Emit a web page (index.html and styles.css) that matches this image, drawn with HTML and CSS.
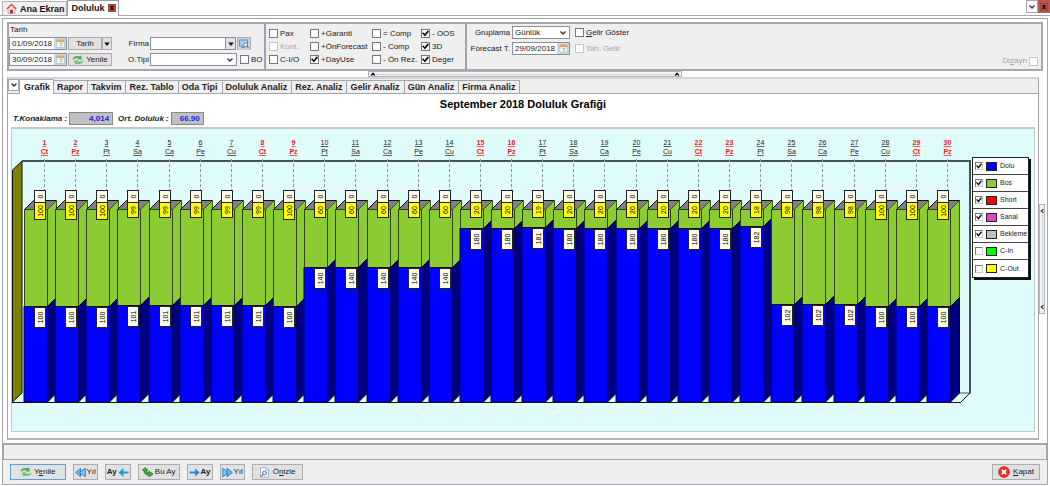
FILE: index.html
```html
<!DOCTYPE html>
<html lang="tr">
<head>
<meta charset="utf-8">
<title>Doluluk</title>
<link rel="stylesheet" href="styles.css">
</head>
<body>
<svg class="defs" aria-hidden="true">
  <symbol id="i-down" viewBox="0 0 8 8"><path d="M1.5 2.5 4 5 6.5 2.5" fill="none" stroke="#333" stroke-width="1.4"/></symbol>
  <symbol id="i-up" viewBox="0 0 8 8"><path d="M1.5 6 4 3 6.5 6" fill="none" stroke="#111" stroke-width="1.6"/></symbol>
  <symbol id="i-left" viewBox="0 0 8 8"><path d="M6 1.5 3 4 6 6.500" fill="none" stroke="#222" stroke-width="1.4"/></symbol>
  <symbol id="i-tri" viewBox="0 0 8 8"><path d="M1.200 2.500h5.600L4 6z" fill="#111"/></symbol>
  <symbol id="i-close" viewBox="0 0 8 8"><rect width="8" height="8" fill="#c0504a" stroke="#803a36"/><path d="M2.500 2 5.500 6M5.500 2 2.500 6" stroke="#301010" stroke-width="1.500"/></symbol>
  <symbol id="i-home" viewBox="0 0 10 10"><path d="M2 5v4.500h6V5L5 2z" fill="#f4e6e2" stroke="#b08078" stroke-width=".5"/><path d="M.8 5.500 5 1.200l4.200 4.300" fill="none" stroke="#cf4a40" stroke-width="1.200"/><path d="M3.800 9.500V6h2.400v3.500z" fill="#b5262a"/></symbol>
  <symbol id="i-cal" viewBox="0 0 12 12"><rect width="12" height="12" fill="#c3d9ec"/><rect x="2" y="2" width="8" height="8" fill="#f3f7ee" stroke="#9aaebb" stroke-width=".5"/><rect x="2" y="2" width="8" height="2.500" fill="#f0a050"/><path d="M5 6h3M5.500 8h2" stroke="#8fc49a" stroke-width="1.200"/></symbol>
  <symbol id="i-look" viewBox="0 0 12 12"><rect width="12" height="12" fill="#c3d3e4"/><rect x="1.500" y="2" width="8" height="6" fill="#a9cdf0" stroke="#6c94bf"/><path d="M3 9.500h4" stroke="#6c94bf"/><circle cx="7.500" cy="6.800" r="1.900" fill="#e5f3ff" stroke="#55799c" stroke-width=".8"/><path d="m9 8.300 1.800 1.900" stroke="#55799c" stroke-width="1.200"/></symbol>
  <symbol id="i-refresh" viewBox="0 0 12 10"><path d="M.6 4.800C.6 1.600 4 .2 7.200 1.300L8.600.2l1.600 4.200-5 .2 1.300-1.200C4.800 2.900 2.800 3.200.6 4.800z" fill="#58b158"/><path d="M11.400 5.200c0 3.200-3.400 4.600-6.600 3.500L3.400 9.800 1.800 5.600l5-.2-1.300 1.200c1.700.5 3.700.2 5.900-1.400z" fill="#74c074"/></symbol>
  <symbol id="i-prev2" viewBox="0 0 11 10"><path d="M5.500.8v8.400L.7 5z" fill="#5cc0f5" stroke="#1a6cae" stroke-width=".8"/><path d="M10.300.8v8.400L4.300 5z" fill="#7fccf8" stroke="#1a6cae" stroke-width=".8"/></symbol>
  <symbol id="i-next2" viewBox="0 0 11 10"><path d="M.8.8v8.400L6.500 5z" fill="#7fccf8" stroke="#1a6cae" stroke-width=".8"/><path d="M5 .8v8.400L10.300 5z" fill="#5cc0f5" stroke="#1a6cae" stroke-width=".8"/></symbol>
  <symbol id="i-prev" viewBox="0 0 10 10"><path d="M.4 5 5 .8V4h4.600v2H5v3.200z" fill="#1f9cf0"/></symbol>
  <symbol id="i-next" viewBox="0 0 10 10"><path d="M9.600 5 5.500 1.200v2.900H.5v1.800h5v2.900z" fill="#1f8fe8"/></symbol>
  <symbol id="i-now" viewBox="0 0 12 10"><path d="M.6 3.300 3.200.5l2.600 2.800H4.400c0 1.700.8 2.500 2.600 2.500V4.200l4 2.900-4 2.500V8.200C3.800 8.200 2 6.500 2 3.300z" fill="#35c430" stroke="#14601a" stroke-width=".8"/></symbol>
  <symbol id="i-preview" viewBox="0 0 10 11"><path d="M1 .7h5.600L9 3v7.200H1z" fill="#fff" stroke="#7f9cc4" stroke-width=".7"/><path d="M6.500.7V3H9" fill="#cfe0f5" stroke="#7f9cc4" stroke-width=".6"/><circle cx="5" cy="6" r="2" fill="#d4e8fb" stroke="#456ba8" stroke-width=".9"/><path d="m3.500 7.500-2.300 2.300" stroke="#c0703a" stroke-width="1.200"/></symbol>
  <symbol id="i-stop" viewBox="0 0 12 12"><circle cx="6" cy="6" r="5.500" fill="#ea3030" stroke="#c01c1c" stroke-width=".6"/><path d="m3.800 3.800 4.400 4.400M8.200 3.800 3.800 8.200" stroke="#fff" stroke-width="1.800"/></symbol>
</svg>

<header class="docs">
  <nav class="doc-tabs">
    <button class="doc-tab"><svg class="ico10"><use href="#i-home"/></svg>Ana Ekran</button>
    <button class="doc-tab active">Doluluk<svg class="ico8"><use href="#i-close"/></svg></button>
  </nav>
  <div class="doc-ctl">
    <button class="mini" aria-label="Liste"><svg class="ico8"><use href="#i-down"/></svg></button>
    <button class="mini red" aria-label="Sekmeyi kapat"><svg class="ico8"><use href="#i-close"/></svg></button>
  </div>
</header>

<main class="window">
  <section class="filters">
    <div class="group dates">
      <label class="cap" for="d1">Tarih</label>
      <span class="field date"><input id="d1" type="text" value="01/09/2018"><button aria-label="Takvim"><svg class="ico12"><use href="#i-cal"/></svg></button></span>
      <span class="split"><button class="btn">Tarih</button><button class="btn arrow" aria-label="Seç"><svg class="ico8"><use href="#i-tri"/></svg></button></span>
      <label class="lab" for="firma">Firma</label>
      <span class="pair"><span class="field firma"><input id="firma" type="text"><button class="drop" aria-label="Aç"><svg class="ico8"><use href="#i-tri"/></svg></button></span><button class="btn look" aria-label="Ara"><svg class="ico12"><use href="#i-look"/></svg></button></span>
      <span class="field date"><input type="text" value="30/09/2018" aria-label="Bitiş"><button aria-label="Takvim"><svg class="ico12"><use href="#i-cal"/></svg></button></span>
      <button class="btn"><svg class="ico-r"><use href="#i-refresh"/></svg>Yenile</button>
      <label class="lab" for="otipi">O.Tipi</label>
      <span class="pair"><span class="field sel otipi"><select id="otipi"><option></option></select><svg class="ico8 chev"><use href="#i-down"/></svg></span><label class="chk"><input type="checkbox">BO</label></span>
    </div>
    <div class="group checks">
      <label class="chk"><input type="checkbox">Pax</label>
      <label class="chk"><input type="checkbox">+Garanti</label>
      <label class="chk"><input type="checkbox">= Comp</label>
      <label class="chk"><input type="checkbox" checked>- OOS</label>
      <label class="chk off"><input type="checkbox" disabled>Kont.</label>
      <label class="chk"><input type="checkbox">+ÖnForecast</label>
      <label class="chk"><input type="checkbox">- Comp</label>
      <label class="chk"><input type="checkbox" checked>3D</label>
      <label class="chk"><input type="checkbox">C-I/O</label>
      <label class="chk"><input type="checkbox" checked>+DayUse</label>
      <label class="chk"><input type="checkbox">- Ön Rez.</label>
      <label class="chk"><input type="checkbox" checked>Deger</label>
    </div>
    <div class="group grouping">
      <label class="lab" for="grup">Gruplama</label>
      <span class="field sel"><select id="grup"><option>Günlük</option></select><svg class="ico8 chev"><use href="#i-down"/></svg></span>
      <label class="chk"><input type="checkbox"><span><u>G</u>elir Göster</span></label>
      <label class="lab" for="fc">Forecast T.</label>
      <span class="field date"><input id="fc" type="text" value="29/09/2018"><button aria-label="Takvim"><svg class="ico12"><use href="#i-cal"/></svg></button></span>
      <label class="chk off"><input type="checkbox" disabled>Tah. Gelir</label>
    </div>
    <label class="chk off design"><span>Di<u>z</u>ayn</span><input type="checkbox" disabled></label>
  </section>

  <div class="hsplit"><div class="hgrip"><svg class="ico8"><use href="#i-up"/></svg><i></i><svg class="ico8"><use href="#i-up"/></svg></div></div>

  <div class="work">
    <section class="pages">
      <nav class="tabs">
        <button class="mini" aria-label="Sekmeler"><svg class="ico8"><use href="#i-down"/></svg></button>
        <button class="tab active">Grafik</button>
        <button class="tab">Rapor</button>
        <button class="tab">Takvim</button>
        <button class="tab">Rez. Tablo</button>
        <button class="tab">Oda Tipi</button>
        <button class="tab">Doluluk Analiz</button>
        <button class="tab">Rez. Analiz</button>
        <button class="tab">Gelir Analiz</button>
        <button class="tab">Gün Analiz</button>
        <button class="tab">Firma Analiz</button>
      </nav>
      <div class="page">
        <h1>September 2018 Doluluk Grafiği</h1>
        <div class="totals">
          <label for="kon">T.Konaklama :</label><input id="kon" type="text" value="4,014" readonly>
          <label for="ort">Ort. Doluluk :</label><input id="ort" type="text" value="66.90" readonly>
        </div>
        <div class="chart">
          <svg id="chart" viewBox="0 0 1022 302" role="img" aria-label="Doluluk grafiği"></svg>
          <div class="legend">
            <label><input type="checkbox" checked><i class="dolu"></i>Dolu</label>
            <label><input type="checkbox" checked><i class="bos"></i>Bos</label>
            <label><input type="checkbox" checked><i class="short"></i>Short</label>
            <label><input type="checkbox" checked><i class="sanal"></i>Sanal</label>
            <label><input type="checkbox" checked><i class="bekleme"></i>Bekleme</label>
            <label><input type="checkbox"><i class="cin"></i>C-In</label>
            <label><input type="checkbox"><i class="cout"></i>C-Out</label>
          </div>
        </div>
      </div>
    </section>
    <div class="vsplit"><div class="vgrip"><svg class="ico8"><use href="#i-left"/></svg><i></i><svg class="ico8"><use href="#i-left"/></svg></div></div>
  </div>

  <div class="status"></div>
  <footer class="actions">
    <button class="btn wide focus"><svg class="ico-r"><use href="#i-refresh"/></svg><span>Y<u>e</u>nile</span></button>
    <button class="btn"><svg class="ico10"><use href="#i-prev2"/></svg>Yıl</button>
    <button class="btn"><b>Ay</b><svg class="ico10"><use href="#i-prev"/></svg></button>
    <button class="btn now"><svg class="ico12"><use href="#i-now"/></svg>Bu Ay</button>
    <button class="btn"><svg class="ico10"><use href="#i-next"/></svg><b>Ay</b></button>
    <button class="btn"><svg class="ico10"><use href="#i-next2"/></svg>Yıl</button>
    <button class="btn mid"><svg class="ico10"><use href="#i-preview"/></svg><span>Ö<u>n</u>izle</span></button>
    <button class="btn mid last"><svg class="ico12"><use href="#i-stop"/></svg><span><u>K</u>apat</span></button>
  </footer>
</main>
<script src="chart.js"></script>
</body>
</html>
```

FILE: styles.css
```css
* { box-sizing: border-box; }
body {
  margin: 0;
  min-height: 100vh;
  display: flex;
  flex-direction: column;
  background: #fff;
  color: #222;
  font: 8px/10px "Liberation Sans", Arial, sans-serif;
}
button, input, select { font: inherit; color: inherit; margin: 0; padding: 0; border: 0; border-radius: 0; }
button { display: inline-flex; align-items: center; justify-content: center; }
svg { flex: none; display: block; }
.defs { position: absolute; width: 0; height: 0; }
.ico8 { width: 8px; height: 8px; }
.ico10 { width: 11px; height: 11px; }
.ico12 { width: 12px; height: 12px; }
.ico-r { width: 12px; height: 10px; }

/* document tabs */
.docs { display: flex; justify-content: space-between; align-items: flex-end; height: 16px; border-bottom: 1px solid #a8a8ac; }
.doc-tabs { display: flex; align-items: flex-end; padding-left: 2px; }
.doc-tab { height: 14px; gap: 3px; padding: 0 1px 0 3px; font-size: 9px; font-weight: bold; color: #111; background: #f0f0f0; border: 1px solid #b4b4b8; border-bottom: 0; white-space: nowrap; }
.doc-tab.active { height: 16px; margin-bottom: -1px; padding: 0 2px 1px 4px; background: #fff; border-color: #9a9aa0; }
.doc-ctl { display: flex; align-self: flex-start; }
.mini { width: 12px; height: 13px; background: #fff; border: 1px solid #a8a8ac; }
.mini.red { background: #c0504a; border-color: #b0605a; }

.window { flex: 1; display: flex; flex-direction: column; margin: 2px 2px 1px; border: 1px solid #a4a6ae; background: #fff; }

/* filters */
.filters { display: flex; margin: 3px 4px 0; background: #efefef; border: 2px solid #a4a7ae; }
.group { border-right: 2px solid #a0a3ab; }
.dates { display: grid; grid-template-columns: 58px 44px 36px auto; column-gap: 1px; row-gap: 3px; padding: 1px 3px 3px 0; grid-template-rows: 9px 13px 13px; width: 257px; }
.cap { grid-column: 1 / -1; padding-left: 1px; }
.field { display: flex; height: 13px; background: #fff; border: 1px solid #8b8f97; position: relative; }
.field input, .field select { flex: 1; min-width: 0; width: 100%; background: #fff; padding: 0 0 0 2px; appearance: none; outline: 0; }
.field button { width: 12px; background: #c3d9ec; }
.field .drop { width: 10px; background: #e2e2e2; border-left: 1px solid #8b8f97; }
.field .ico12 { width: 11px; height: 11px; }
.chev { position: absolute; right: 2px; top: 2px; pointer-events: none; }
.btn { height: 13px; gap: 2px; background: #e1e1e1; border: 1px solid #adadad; white-space: nowrap; }
.split { display: flex; }
.split .btn { flex: 1; }
.split .arrow { flex: 0 0 9px; }
.lab { text-align: right; line-height: 13px; white-space: nowrap; }
.pair { display: flex; gap: 1px; }
.firma { width: 86px; }
.otipi { width: 87px; margin-right: 2px; }
.look { width: 14px; }

.chk { display: inline-flex; align-items: center; gap: 2px; white-space: nowrap; }
.chk input, .legend input { appearance: none; flex: none; width: 9px; height: 9px; background: #fff; border: 1px solid #777; }
.chk input:checked::before, .legend input:checked::before {
  content: ""; display: block; width: 7px; height: 7px; background: #111;
  clip-path: polygon(0 45%, 18% 32%, 40% 58%, 82% 4%, 100% 20%, 42% 94%);
}
.chk.off { color: #a4a4a8; }
.chk.off input { border-color: #c4c4c8; }
.checks { display: grid; grid-template-columns: 41px 62px 49px 42px; grid-auto-rows: 13px; padding: 3px 2px 2px 3px; }
.grouping { display: grid; grid-template-columns: 43px 58px auto; grid-auto-rows: 13px; gap: 3px 2px; padding: 2px 0 0; border: 0; }
.grouping .chk { padding-left: 3px; }
.design { margin-left: auto; align-self: flex-end; padding: 0 3px 3px; }

/* splitters */
.hsplit { display: flex; justify-content: center; height: 6px; }
.hgrip { display: flex; align-items: center; justify-content: space-between; width: 30%; height: 6px; padding: 0 1px; background: #f2f2f2; border: 1px solid #b4b4b8; }
.hgrip svg { width: 6px; height: 6px; }
.hgrip i { flex: 1; border-top: 1px dotted #8fc4e8; }
.work { display: flex; flex: 1; padding-left: 4px; }
.vsplit { display: flex; flex-direction: column; width: 8px; padding-top: 127px; }
.vgrip { display: flex; flex-direction: column; justify-content: space-between; align-items: center; width: 6px; height: 110px; padding: 2px 0; background: #f2f2f2; border: 1px solid #b4b4b8; }
.vgrip svg { width: 6px; height: 8px; }
.vgrip i { flex: 1; border-left: 1px dotted #a8c8e0; }

/* pages */
.pages { flex: 1; min-width: 0; border: 1px solid #a4a6ae; border-top: 2px solid #d4d5da; border-bottom: 2px solid #b4b6be; }
.tabs { display: flex; align-items: flex-end; height: 15px; background: #efefef; border-bottom: 1px solid #a4a6ae; }
.tabs .mini { width: 11px; height: 12px; margin-bottom: 2px; }
.tab { height: 13px; padding: 0 4px 0 3px; font-size: 9px; font-weight: bold; background: #efefef; border: 1px solid #a4a6ae; border-width: 1px 1px 0 0; white-space: nowrap; }
.tab.active { height: 15px; margin-bottom: -1px; padding: 0 3px 0 4px; background: #fff; border-left-width: 1px; }
.page { padding: 3px; }
h1 { margin: 0; font-size: 11px; line-height: 14px; text-align: center; color: #000; }
.totals { display: flex; align-items: center; gap: 2px; padding: 1px 0 2px 2px; font-weight: bold; }
.totals label { font-style: italic; white-space: nowrap; }
.totals input { width: 44px; height: 13px; padding-right: 3px; text-align: right; color: #1c1cf0; background: #c0c0c0; border: 1px solid #888; margin-right: 3px; }
.totals input:last-child { width: 33px; }
.chart { position: relative; background: #e0fbfb; border: 1px solid #c4c8cc; border-top-width: 2px; }
.chart > svg { width: 100%; height: auto; font: 7px "Liberation Sans", Arial, sans-serif; }

/* legend */
.legend { position: absolute; right: 5px; top: 28px; width: 57px; background: #fff; border: 1px solid #222; box-shadow: 2px 2px 0 #111; font-size: 7px; }
.legend label { display: flex; align-items: center; gap: 3px; height: 17px; padding-left: 2px; border-bottom: 1px solid #444; }
.legend label:last-child { border-bottom: 0; }
.legend input { width: 8px; height: 8px; border-color: #777 #ccc #ccc #777; }
.legend input:checked::before { width: 6px; height: 6px; }
.legend i { width: 11px; height: 9px; border: 1px solid #222; }
.dolu { background: #00f; }
.bos { background: #8ccb32; }
.short { background: #f00; }
.sanal { background: #dc46c4; }
.bekleme { background: #c0c0c0; }
.cin { background: #0f0; }
.cout { background: #ff0; }

/* footer */
.status { height: 17px; margin-top: 3px; background: #efefef; border: 1px solid #a4a6ae; border-width: 2px 1px 1px; }
.actions { display: flex; gap: 7px; padding: 4px 7px; background: #efefef; }
.actions .btn { height: 16px; gap: 1px; padding: 0 1px; color: #222; }
.actions .wide { padding: 0 9px; gap: 2px; }
.actions .now { padding: 0 3px; }
.actions .mid { padding: 0 6px; gap: 3px; }
.actions .focus { border-color: #5f9fd6; }
.actions .last { margin-left: auto; padding: 0 5px; }
```

FILE: chart.js
```js
const filled = [100, 100, 100, 101, 101, 101, 101, 101, 100, 140, 140, 140, 140, 140, 180,
  180, 181, 180, 180, 180, 180, 180, 180, 182, 102, 102, 102, 100, 100, 100];
const names = ["Ct", "Pz", "Pt", "Sa", "Ca", "Pe", "Cu"];
const ROOMS = 200, BASE = 273, TOP = 80, X0 = 12, STEP = 903 / 29, W = 23, D = 9;
const scale = (BASE - TOP) / ROOMS;

const poly = (pts, fill, stroke = "#111") =>
  `<polygon points="${pts}" fill="${fill}" stroke="${stroke}" stroke-width="1"/>`;
const line = (x1, y1, x2, y2, extra) =>
  `<line x1="${x1}" y1="${y1}" x2="${x2}" y2="${y2}" ${extra}/>`;
const tag = (x, y, h, fill, value) =>
  `<rect x="${x - 5.5}" y="${y}" width="11" height="${h}" fill="${fill}" stroke="#222"/>` +
  `<text transform="translate(${x + 3} ${y + h / 2}) rotate(-90)" text-anchor="middle" fill="#000">${value}</text>`;

let out = poly("0.5,41 10,32 10,264 0.5,273", "#808000");
out += line(10, 32, 959, 32, 'stroke="#465252" stroke-width="2"');
out += line(958, 32, 958, 264, 'stroke="#465252" stroke-width="2"');
out += line(946, 264, 959, 264, 'stroke="#465252"');
out += line(949, 273, 958, 264, 'stroke="#111"');

filled.forEach((n, i) => {
  const x = Math.round(X0 + i * STEP) + 0.5, y = Math.round(BASE - n * scale) + 0.5;
  const r = x + W, top = TOP + 0.5, c = x + 20;
  const weekend = i % 7 < 2;
  const style = `text-anchor="middle" text-decoration="underline" ${weekend ? 'fill="#f01818" font-weight="bold"' : 'fill="#222"'}`;
  out += `<text x="${c}" y="16" ${style}>${i + 1}</text><text x="${c}" y="25" ${style}>${names[i % 7]}</text>`;
  out += line(c, 30, c, 72, 'stroke="#8a9898" stroke-dasharray="3 2"');
  out += poly(`${x},${top} ${x + D},${top - D} ${r + D},${top - D} ${r},${top}`, "#808080");
  out += poly(`${r},${top} ${r + D},${top - D} ${r + D},${y - D} ${r},${y}`, "#8ccb32", "#3d5c10");
  out += poly(`${x},${top} ${r},${top} ${r},${y} ${x},${y}`, "#8ccb32", "#2c420c");
  out += poly(`${r},${y} ${r + D},${y - D} ${r + D},${BASE - D} ${r},${BASE}`, "#000080", "#00002a");
  out += poly(`${x - 0.5},${y} ${r},${y} ${r},${BASE} ${x - 0.5},${BASE}`, "#00f", "#000060");
  out += line(x, y, r, y, 'stroke="#111"');
});
filled.forEach((n, i) => {
  const x = Math.round(X0 + i * STEP) + 16, y = Math.round(BASE - n * scale) + 1.5;
  const free = ROOMS - n;
  out += tag(x, 61.5, 12, "#fffbe8", 0);
  out += tag(x, 73.5, free > 99 ? 17 : 15, "#ff0", free);
  out += tag(x, y, 20, "#fffbe8", n);
});
out += line(0, 273.5, 949, 273.5, 'stroke="#111"');
document.getElementById("chart").innerHTML = out;
```
